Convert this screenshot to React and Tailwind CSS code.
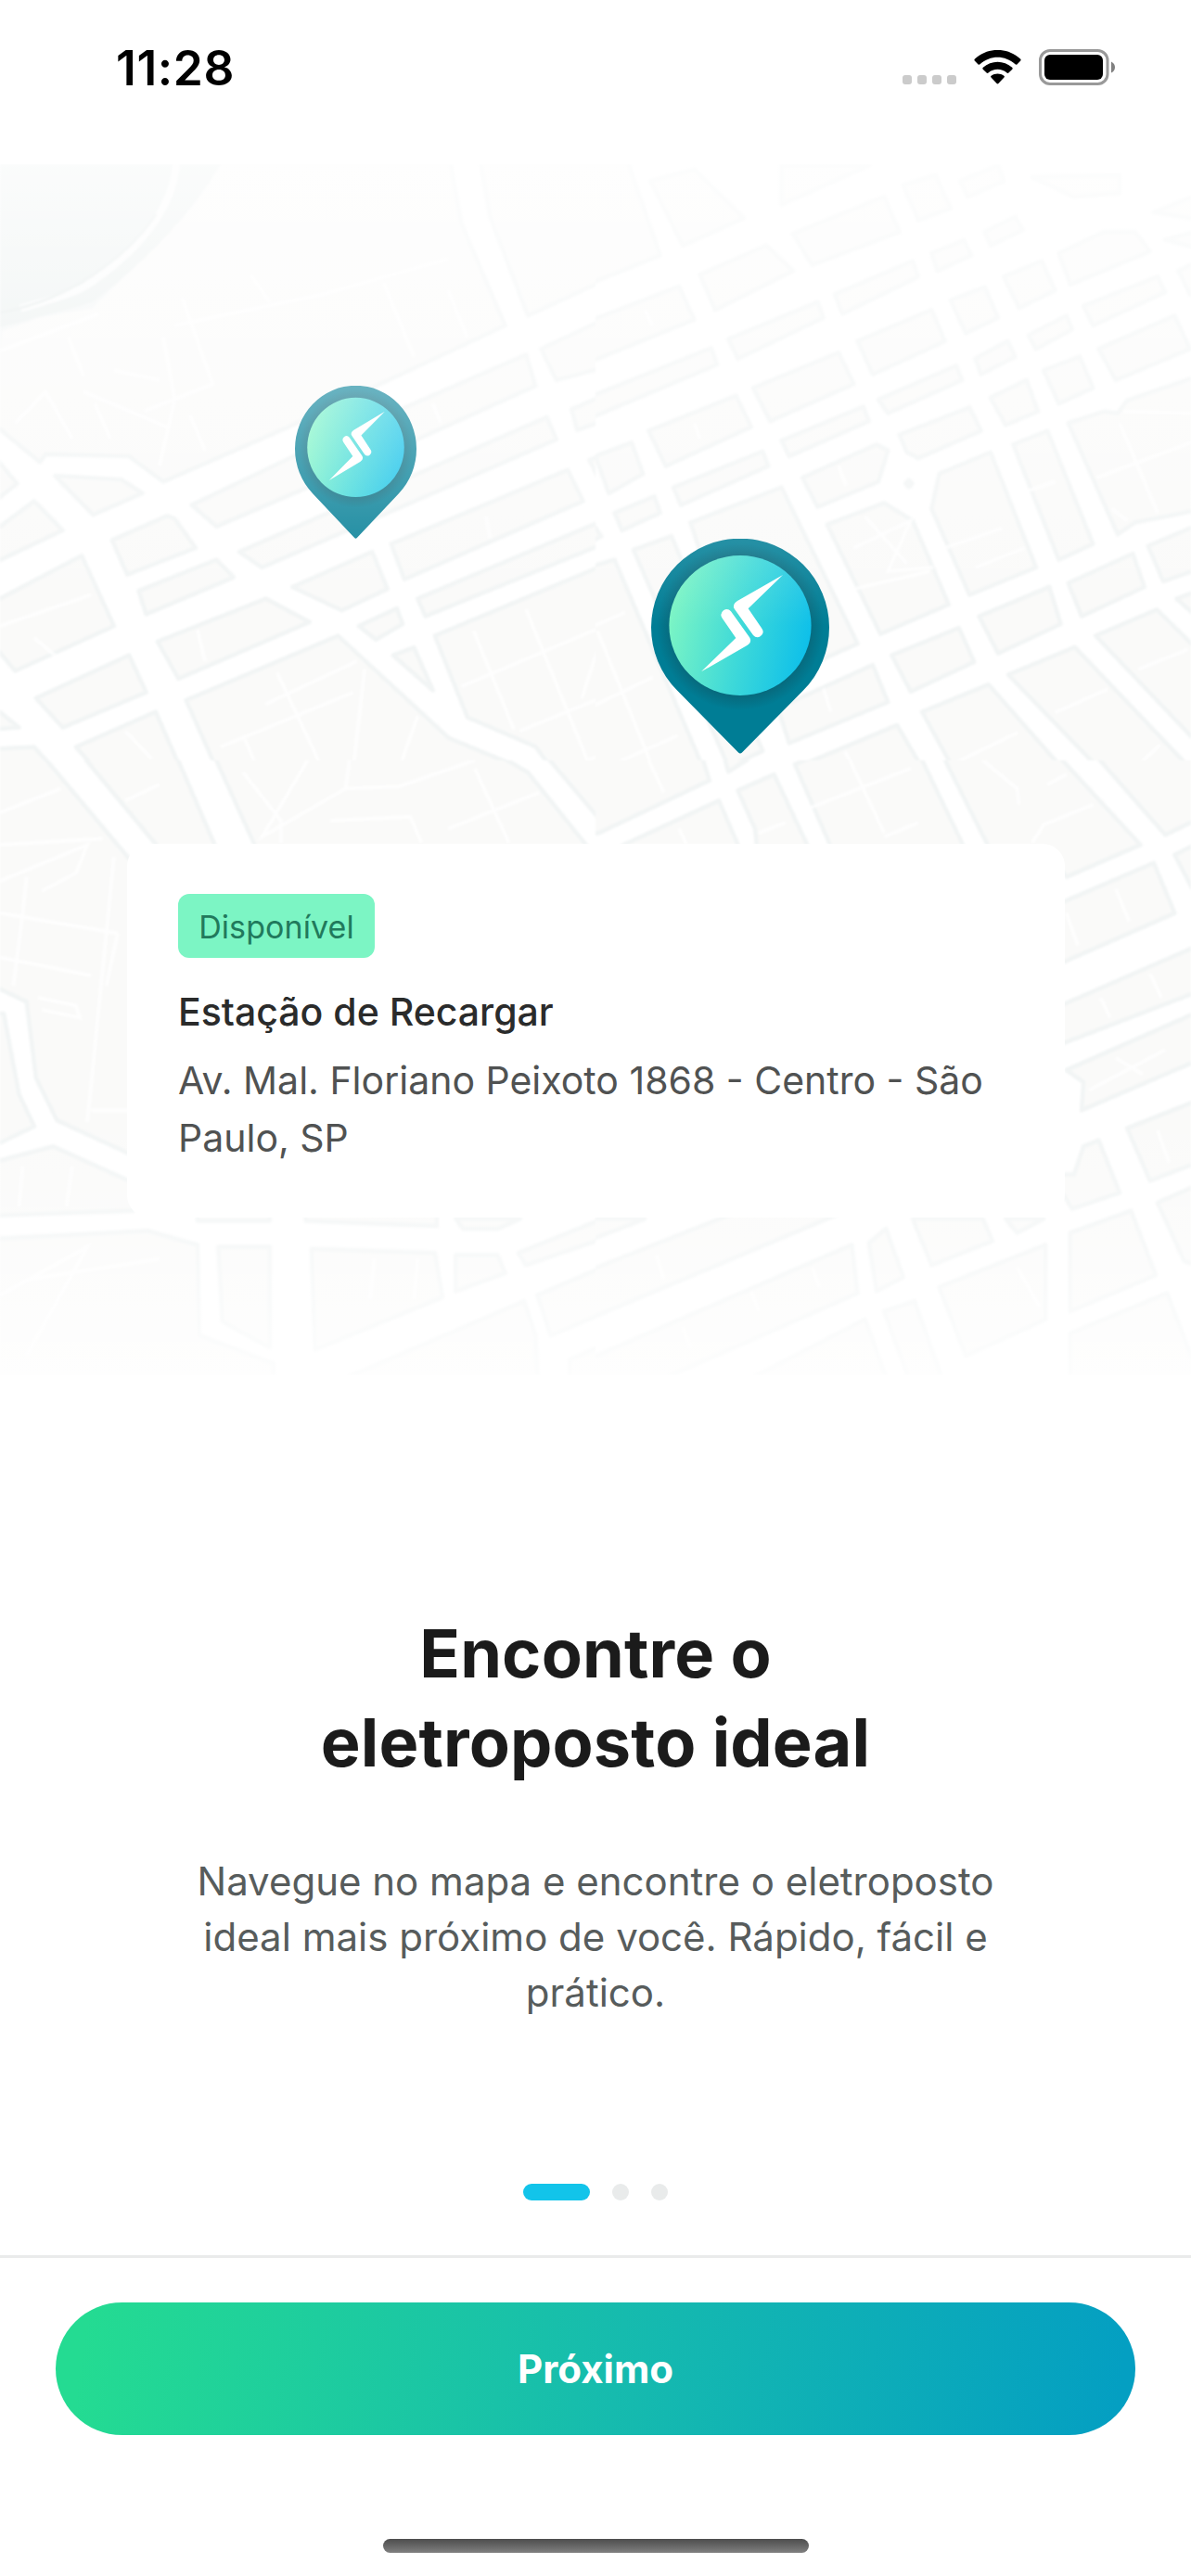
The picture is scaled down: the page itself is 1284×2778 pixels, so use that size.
const quadrants = [
  {
    id: 'nw', x: 0, y: -7, width: 642, height: 660,
    blocks: [
      '0,440 100,405 240,380 440,190 600,-20 1180,-20 1215,170 1330,430 760,690 430,830 340,765 120,760 105,780 -20,680',
      '1260,-20 1290,150 1390,405 1600,310 1600,-20',
      '1425,490 1600,410 1600,535 1465,570',
      '505,890 780,762 1385,505 1410,585 1000,765 570,945',
      '295,980 440,918 460,925 515,1000 335,1068',
      '630,1010 1440,665 1465,722 690,1050',
      '365,1110 570,1030 615,1075 385,1170',
      '1030,990 1495,800 1535,880 1065,1080',
      '770,1100 980,1010 1020,1105 900,1160',
      '1100,1130 1600,925 1600,985 1120,1175',
      '945,1200 1045,1155 1060,1195 990,1235',
      '1505,645 1600,605 1600,670 1520,698',
      '1552,775 1600,755 1600,825 1580,830',
      '145,815 320,825 375,860 245,915',
      '-20,760 45,835 -20,885',
      '90,880 165,955 -20,1040 -20,960',
      '-20,1140 215,1020 300,1200 40,1315 -20,1245',
      '95,1385 340,1275 385,1370 165,1460',
      '415,1240 700,1130 815,1190 470,1335',
      '490,1390 890,1225 1182,1487 1377,1566 1420,1620 595,1620',
      '1145,1225 1600,1040 1600,1620 1495,1620 1410,1509 1231,1434',
      '1035,1275 1090,1255 1140,1365',
      '200,1510 410,1420 500,1620 300,1620',
      '-20,1405 50,1460 -20,1465',
      '-20,1515 90,1510 190,1620 -20,1620',
    ],
    lanes:
      'M0 495L260 400M180 460L220 560M430 460L460 620L420 790M300 545L420 570M480 360L560 580L380 650M220 600L440 690M460 430L850 350L1180 260M1010 320L1090 510M1180 340L1230 460M660 300L710 370M40 680L120 600L190 720M250 630L290 720M500 660L540 750M1280 920L1290 975M1140 630L1160 680M0 1200L240 1120M90 1230L150 1280M520 1210L540 1290M700 1400L940 1290M730 1320L850 1568M580 1510L930 1370M960 1310L930 1568M1050 1568L1100 1430M1247 1212L1353 1465M1385 1157L1560 1576M1215 1355L1581 1204M1369 1469L1638 1362M1581 1236L1532 1386M1420 1600L1568 1535M330 1470L400 1540M640 1480L680 1568',
  },
  {
    id: 'ne', x: 642, y: -7, width: 642, height: 660,
    blocks: [
      '-20,-20 75,-20 95,40 170,250 -20,325',
      '145,60 260,30 390,155 230,225',
      '490,20 720,20 490,120',
      '520,195 760,100 800,190 570,275',
      '810,70 895,45 935,130 850,160',
      '960,60 1060,20 1075,60 980,100',
      '1150,50 1380,45 1380,90 1260,100',
      '1470,140 1600,90 1600,160',
      '1500,210 1600,185 1600,235',
      '1535,290 1600,260 1600,350 1565,350',
      '275,300 450,225 520,290 315,390',
      '-20,420 220,330 260,415 -20,525',
      '630,350 835,265 850,305 650,400',
      '885,245 970,212 990,250 900,290',
      '1025,190 1105,152 1125,185 1040,225',
      '350,465 585,370 600,410 375,515',
      '-20,615 305,488 320,530 -20,670',
      '690,470 885,390 920,470 730,555',
      '935,365 1025,332 1060,410 975,450',
      '1075,305 1175,265 1210,340 1115,385',
      '1220,245 1340,190 1420,190 1460,240 1250,325',
      '1285,380 1480,305 1500,345 1310,430',
      '1140,455 1240,405 1255,440 1160,490',
      '1000,515 1085,470 1105,510 1015,555',
      '1325,490 1525,405 1565,490 1370,570',
      '415,590 640,500 680,580 460,675',
      '745,620 950,533 965,570 770,655',
      '1180,545 1275,510 1310,590 1220,630',
      '1040,615 1135,570 1165,650 1080,685',
      '490,725 705,638 720,675 510,765',
      '140,700 370,610 410,690 185,790',
      '800,710 985,640 1015,700 850,770 820,755',
      '205,845 440,753 455,790 225,890',
      '545,820 740,735 770,750 745,830 585,895',
      '0,765 95,730 125,810 35,860',
      '50,910 155,868 170,910 70,955',
      '-20,920 15,970 -20,990',
      '250,935 490,845 690,1245 400,1370',
      '100,1005 200,970 440,1520 350,1560',
      '-20,1050 50,1030 308,1620 -20,1620',
      '610,940 760,885 835,930 930,1145 750,1220',
      '905,810 1040,755 1160,1050 985,1120 885,900',
      '825,826 834,835 825,844 816,835',
      '1100,735 1190,700 1310,990 1220,1030',
      '1245,680 1340,650 1375,655 1400,622 1600,555 1600,900 1420,935 1375,965',
      '1010,1175 1195,1100 1225,1195 1060,1270',
      '1245,1090 1415,1015 1445,1100 1280,1175',
      '1455,995 1600,935 1600,1050 1495,1085',
      '780,1275 957,1205 997,1292 830,1368',
      '1317,1225 1478,1158 1600,1275 1600,1515',
      '1530,1130 1600,1105 1600,1190',
      '1087,1325 1262,1254 1620,1620 1380,1620',
      '860,1420 1035,1350 1279,1620 973,1620',
      '480,1410 730,1300 770,1395 510,1500',
      '530,1562 794,1454 894,1620 557,1620',
    ],
    lanes:
      'M130 390L150 430M260 680L275 720M640 790L660 840M600 1360L620 1420M680 1000L830 930L770 1060L890 1050M710 920L820 1040M660 1110L880 1060M920 1000L1070 950M1000 1050L1130 1000M1120 860L1210 830M1380 680L1480 910M1320 820L1568 730M1360 900L1400 930M-142 1260L78 1165M5 1212L176 1624M-60 1430L151 1331M-60 1600L216 1481M1210 1422L1348 1362M1380 1600L1486 1505M1429 1311L1560 1260M941 1553L1112 1473M656 1521L713 1616M1390 650L1568 655',
  },
  {
    id: 'sw', x: 0, y: 643, width: 642, height: 680,
    blocks: [
      '-20,-20 105,-20 345,250 345,980 150,895 95,790 70,600 -20,560',
      '210,-20 460,-20 570,220 420,220',
      '560,-20 1300,-20 1390,30 1560,230 680,230',
      '1430,-20 1600,-20 1600,170',
      '-20,630 10,630 50,830 90,910 -20,960',
      '-20,1000 140,960 350,1050 350,1120 -20,1132',
      '-20,1190 390,1170 520,1205 525,1430 720,1500 720,1620 -20,1620',
      '575,1210 710,1210 710,1460 585,1395',
      '820,1215 1145,1225 1165,1335 830,1465',
      '1200,1230 1310,1230 1330,1275 1200,1320',
      '1365,1225 1600,1135 1600,1185 1385,1255',
      '520,1100 710,1100 710,1145 520,1145',
      '805,1100 1150,1100 1150,1158 805,1145',
      '1200,1140 1370,1140 1310,1165 1220,1165',
      '1415,1330 1600,1255 1600,1370 1450,1430',
      '1500,1490 1600,1450 1600,1620 1500,1620',
      '900,1540 1380,1345 1410,1430 1420,1620 900,1620',
    ],
    lanes:
      'M0 130L160 70M0 210L270 195M0 300L230 210L200 280L110 325M70 290L60 380L35 560M0 380L310 430M0 490L240 535M300 240L230 900M310 430L280 560M100 590L200 610L210 640L110 620M240 870H340M330 100L420 60M640 30L740 150V205M810 0L690 190L910 70L920 0M910 70L1050 65L1250 0M870 150L1080 140L1110 205M1250 20L1340 205M1180 170L1420 80M60 1010L50 1110M190 1010L175 1110M0 1330L230 1210L70 1480M80 1290L420 1240M985 1240L975 1340M1100 1240L1090 1340',
  },
  {
    id: 'se', x: 642, y: 643, width: 642, height: 680,
    blocks: [
      '-20,-20 277,-20 300,50 10,180 -20,185',
      '335,-20 430,-20 350,28',
      '70,212 325,100 375,210 375,260 70,260',
      '375,75 470,35 560,215 425,215 420,170',
      '525,10 600,-20 850,-20 970,215 620,215',
      '910,-20 1210,-20 1435,210 1240,290 1200,230 1035,215',
      '1310,-20 1600,-20 1600,140 1500,185',
      '1525,235 1600,200 1600,370',
      '1200,365 1470,255 1525,380 1200,515',
      '1200,620 1600,455 1600,570 1200,715',
      '1240,770 1600,620 1600,740 1280,870 1285,800',
      '1400,915 1600,840 1600,995 1460,1045',
      '1285,960 1325,945 1380,1075 1255,1115 1200,1030 1260,1030',
      '1480,1100 1600,1050 1600,1260 1550,1245',
      '1250,1175 1410,1120 1475,1280 1250,1370',
      '1250,1425 1505,1325 1600,1560 1600,1620 1250,1620',
      '905,1310 1185,1205 1185,1390 975,1480',
      '835,1140 1020,1140 1045,1195 885,1255',
      '1080,1140 1180,1140 1110,1175',
      '720,1200 765,1165 810,1285 740,1320',
      '-20,1270 380,1120 660,1120 -20,1390',
      '-20,1490 675,1205 690,1325 100,1570 -20,1600',
      '280,1600 710,1390 790,1600',
      '760,1370 840,1345 910,1530 830,1550',
      '-20,1140 130,1140 -20,1195',
    ],
    lanes:
      'M140 0L180 80M220 170L240 210M430 180L500 155M560 120L830 20M670 0L760 180M760 190L850 155M1020 0L1110 70L1115 110M1150 205L1180 160L1310 110M1190 60L1240 35M1370 320L1405 400M1240 380L1270 460M1460 530L1490 590M1330 590L1355 640M1300 820L1500 720M1370 740L1440 780M1480 920L1510 1000M160 1230L180 1290M570 1260L590 1310M1110 1260L1170 1360M410 1320L430 1370M230 1410L250 1460',
  },
];

function StreetMap() {
  return (
    <svg className="absolute inset-0 h-full w-full blur-[1.2px]" viewBox="0 0 1284 1306">
      {quadrants.map(({ id, x, y, width, height, blocks, lanes }) => (
        <svg
          key={id}
          x={x}
          y={y}
          width={width}
          height={height}
          viewBox="0 0 1568 1568"
          preserveAspectRatio="none"
        >
          <rect width="1568" height="1568" fill="#fff" />
          <g fill="#fafaf9" stroke="#f2f5f5" strokeWidth="11" strokeLinejoin="round">
            {blocks.map((points) => (
              <polygon key={points} points={points} />
            ))}
          </g>
          <path d={lanes} fill="none" stroke="#fff" strokeOpacity=".75" strokeWidth="9" />
        </svg>
      ))}
      {/* water */}
      <path d="M0 -4H240C215 42 165 100 98 150L45 164L0 176Z" fill="#e9efee" />
      <path d="M190 0C186 48 150 94 90 133C66 145 30 152 22 156" fill="none" stroke="#fbfcfc" strokeWidth="8" />
      <path d="M0 160C80 146 142 94 168 54" fill="none" stroke="#e3eae9" strokeWidth="3" />
    </svg>
  );
}

function Pin({ id, className }) {
  return (
    <svg className={className} viewBox="0 0 192 232" preserveAspectRatio="none">
      <defs>
        <linearGradient id={`${id}-fill`} x1="0" y1=".4" x2="1" y2=".6">
          <stop offset="0" stopColor="#7cf5c4" />
          <stop offset=".5" stopColor="#40dad8" />
          <stop offset="1" stopColor="#0dbfea" />
        </linearGradient>
        <radialGradient id={`${id}-shade`}>
          <stop offset=".84" stopColor="#0b5f70" stopOpacity=".6" />
          <stop offset="1" stopColor="#0b5f70" stopOpacity="0" />
        </radialGradient>
      </defs>
      <path d="M28 163.5A96 96 0 1 1 164 163.5L98 230.5Q96 232.5 94 230.5Z" fill="#007d95" />
      <circle cx="96" cy="95" r="90" fill={`url(#${id}-shade)`} />
      <ellipse cx="96" cy="93.5" rx="76.6" ry="75.4" fill={`url(#${id}-fill)`} />
      <g transform="translate(-22 -21) scale(.33333)" fill="#fff">
        <path d="M492 180L345 264Q326 276 336 291L396 375Q407 387 420 378Q434 367 424 353L380 289Z" />
        <path d="M228 493L375 409Q394 397 384 382L324 298Q313 286 300 295Q286 306 296 320L340 384Z" />
      </g>
    </svg>
  );
}

function StatusBar() {
  return (
    <header className="flex h-[177px] items-start justify-between pl-[125px] pr-[81px] pt-[53px]">
      <span className="text-[51.500px] font-semibold leading-[40px] tracking-[0.600px] text-black">11:28</span>
      <div className="flex items-start">
        <div className="mt-[28px] flex gap-[6px]">
          {[0, 1, 2, 3].map((i) => (
            <span key={i} className="h-[10px] w-[10px] rounded-[3px] bg-[#cbcbcb]" />
          ))}
        </div>
        <svg className="ml-[19px] mt-px h-[38px] w-[51px]" viewBox="0 0 51 38">
          <path d="M1 11.8Q-.2 10.7 1 9.6C15-3.4 36-3.4 50 9.6Q51.200 10.7 50 11.800L46.400 15.4Q45.500 16.200 44.500 15.300C33.500 5.300 17.500 5.300 6.500 15.300Q5.500 16.200 4.600 15.400Z" />
          <path d="M9.700 20.700Q8.700 19.700 9.800 18.700C18.700 10.700 32.300 10.700 41.200 18.700Q42.300 19.700 41.300 20.700L37.400 24.500Q36.500 25.400 35.500 24.500C29.800 19.600 21.200 19.600 15.500 24.500Q14.500 25.400 13.600 24.500Z" />
          <path d="M18.500 29.500Q17.500 28.500 18.600 27.700C22.600 24.600 28.400 24.600 32.400 27.700Q33.500 28.500 32.500 29.500L26.400 36Q25.500 36.900 24.600 36Z" />
        </svg>
        <svg className="ml-[19px] h-[39px] w-[83px]" viewBox="0 0 83 39">
          <rect x="1.500" y="1.500" width="72.500" height="36" rx="10.500" fill="none" stroke="#999" strokeWidth="3" />
          <rect x="6" y="6" width="63" height="27" rx="6" />
          <path d="M78 13.500Q82 15.500 82 19.500T78 25.500Z" fill="#808080" />
        </svg>
      </div>
    </header>
  );
}

function StationCard() {
  return (
    <div className="absolute left-[137px] top-[733px] h-[403px] w-[1011px] rounded-[24px] bg-white pl-[55px] pt-[54px]">
      <span className="flex h-[69px] w-[212px] items-center justify-center rounded-[12px] bg-[#7cf5c4] pt-[3px] text-[34px] leading-none tracking-[0.1px] text-[#21795c]">
        Disponível
      </span>
      <h2 className="mt-[28px] text-[41px] font-medium leading-[60px] text-[#2a2b2b]">Estação de Recargar</h2>
      <p className="mt-[14px] w-[900px] text-[41px] leading-[61.500px] text-[#505252]">
        Av. Mal. Floriano Peixoto 1868 - Centro - São
        <br />
        Paulo, SP
      </p>
    </div>
  );
}

export default function App() {
  return (
    <div className="flex h-[2778px] w-[1284px] flex-col overflow-hidden bg-white font-['Inter',sans-serif]">
      <StatusBar />

      <section className="relative h-[1306px] overflow-hidden">
        <StreetMap />
        <Pin id="far" className="absolute left-[318px] top-[239px] h-[165px] w-[131px]" />
        <Pin id="near" className="absolute left-[702px] top-[404px] h-[232px] w-[192px]" />
        <div className="absolute inset-x-0 top-0 h-[498px] bg-linear-to-b from-white/80 to-white/0" />
        <div className="absolute inset-x-0 bottom-0 h-[290px] bg-linear-to-t from-white/80 to-white/0" />
        <StationCard />
      </section>

      <main className="flex h-[949px] flex-col items-center pt-[252px] text-center">
        <h1 className="text-[72px] font-bold leading-[96px] tracking-[0.150px] text-[#1b1b1b]">
          Encontre o
          <br />
          eletroposto ideal
        </h1>
        <p className="mt-[72px] text-[42px] leading-[60px] text-[#575c5c]">
          Navegue no mapa e encontre o eletroposto
          <br />
          ideal mais próximo de você. Rápido, fácil e
          <br />
          prático.
        </p>
        <div className="mt-auto mb-[59px] flex gap-[24px]">
          <span className="h-[18px] w-[72px] rounded-full bg-[#12c4ea]" />
          <span className="h-[18px] w-[18px] rounded-full bg-[#e9ebeb]" />
          <span className="h-[18px] w-[18px] rounded-full bg-[#e9ebeb]" />
        </div>
      </main>

      <footer className="flex flex-1 flex-col items-center border-t-[3px] border-[#eaebeb] px-[60px] pt-[48px]">
        <button className="h-[143px] w-full rounded-full bg-[linear-gradient(98deg,#24db92_3%,#16bbae_52%,#049fc2_98%)] text-[42px] font-bold text-white">
          Próximo
        </button>
        <div className="mt-auto mb-[25px] h-[15px] w-[459px] rounded-full bg-linear-to-b from-[#4d4d4d] to-[#808080]" />
      </footer>
    </div>
  );
}
